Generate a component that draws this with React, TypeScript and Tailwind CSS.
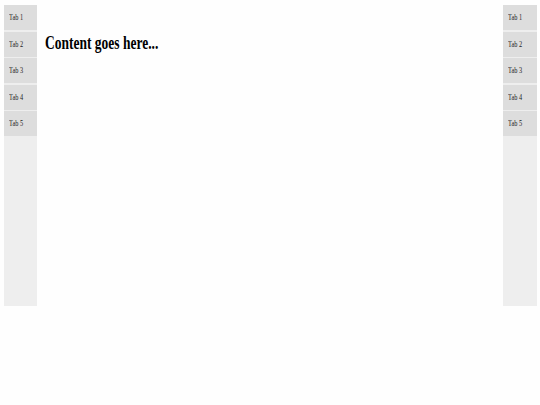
const TABS = ['Tab 1', 'Tab 2', 'Tab 3', 'Tab 4', 'Tab 5']

const Sidebar = ({ className }: { className?: string }) => {
  return (
    <div className={`h-[301px] bg-[#eeeeee] flex flex-col ${className ?? ''}`}>
      {TABS.map(tab => (
        <div key={tab} className="h-[25px] mb-[1.5px] bg-[#dddddd] flex items-center pl-[5px]">
          <span
            className="inline-block origin-left scale-x-[0.7] text-[9px] leading-none text-[#222] whitespace-nowrap"
            style={{ fontFamily: '"Liberation Serif", "Times New Roman", serif' }}
          >
            {tab}
          </span>
        </div>
      ))}
    </div>
  )
}

const App = () => {
  return (
    <div className="w-[540px] h-[405px] bg-[#fefefe] flex items-start pt-[5px]">
      <Sidebar className="w-[33px] ml-[4px] shrink-0" />
      <main className="flex-1 pl-[8px] pt-[26px]">
        <h1
          className="inline-block origin-left scale-x-[0.75] text-[18px] leading-[18px] font-bold text-black whitespace-nowrap"
          style={{ fontFamily: '"Liberation Serif", "Times New Roman", serif' }}
        >
          Content goes here...
        </h1>
      </main>
      <Sidebar className="w-[34px] mr-[3px] shrink-0" />
    </div>
  )
}

export default App
